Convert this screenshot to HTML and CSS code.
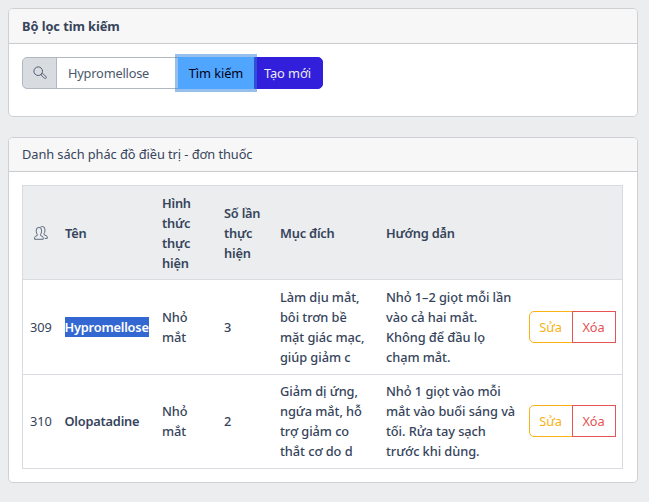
FILE: index.html
```html
<!DOCTYPE html>
<html lang="vi">
<head>
<meta charset="utf-8">
<title>Phác đồ điều trị - đơn thuốc</title>
<link rel="stylesheet" href="styles.css">
</head>
<body>
<section class="card filter">
  <header class="card-header strong">Bộ lọc tìm kiếm</header>
  <div class="card-body">
    <div class="input-group">
      <span class="addon">
        <svg class="icon" width="14" height="14" viewBox="0 0 14 14" fill="none" stroke="#4f5d73"><circle cx="5.2" cy="5.2" r="4.3"/><path d="M8.3 8.3l1.2-.8 3.4 2.9q.9.9.2 1.700-.8.8-1.700.1L8.2 9.2z" stroke-width=".9"/></svg>
      </span>
      <input class="field" type="text" value="Hypromellose">
      <button class="btn search">Tìm kiếm</button>
      <button class="btn create">Tạo mới</button>
    </div>
  </div>
</section>
<section class="card list">
  <header class="card-header">Danh sách phác đồ điều trị - đơn thuốc</header>
  <div class="card-body">
    <table class="table">
      <colgroup><col class="c-id"><col class="c-name"><col class="c-form"><col class="c-count"><col class="c-goal"><col class="c-guide"><col></colgroup>
      <thead>
        <tr>
          <th class="people"><svg class="icon" width="14" height="14" viewBox="0 0 14 14" fill="none" stroke="#4f5d73" stroke-width=".9"><path d="M.6 13.300v-1.700q0-.9 1-1.300l1.600-.7V8.200Q2.300 7.300 2.300 5.800V4q0-2.600 2.600-2.600T7.500 4v1.800q0 1.500-.9 2.400v1.400l1.600.7q1 .4 1 1.300v1.700z"/><path d="M6.400 1.200Q7.100.5 8.200.5q2.700 0 2.700 2.700v1.700q0 1.600-.9 2.500v1.300l2.100.9q1.200.5 1.200 1.500v1.300h-2.600"/></svg></th>
          <th>Tên</th><th>Hình<br>thức<br>thực<br>hiện</th><th>Số lần<br>thực<br>hiện</th><th>Mục đích</th><th>Hướng dẫn</th><th></th>
        </tr>
      </thead>
      <tbody>
        <tr>
          <td class="id">309</td><td class="name"><mark>Hypromellose</mark></td><td>Nhỏ<br>mắt</td><td>3</td>
          <td>Làm dịu mắt,<br>bôi trơn bề<br>mặt giác mạc,<br>giúp giảm c</td>
          <td>Nhỏ 1–2 giọt mỗi lần<br>vào cả hai mắt.<br>Không để đầu lọ<br>chạm mắt.</td>
          <td><div class="actions"><button class="btn edit">Sửa</button><button class="btn delete">Xóa</button></div></td>
        </tr>
        <tr>
          <td class="id">310</td><td class="name">Olopatadine</td><td>Nhỏ<br>mắt</td><td>2</td>
          <td>Giảm dị ứng,<br>ngứa mắt, hỗ<br>trợ giảm co<br>thắt cơ do d</td>
          <td>Nhỏ 1 giọt vào mỗi<br>mắt vào buổi sáng và<br>tối. Rửa tay sạch<br>trước khi dùng.</td>
          <td><div class="actions"><button class="btn edit">Sửa</button><button class="btn delete">Xóa</button></div></td>
        </tr>
      </tbody>
    </table>
  </div>
</section>
</body>
</html>
```
FILE: styles.css
```css
* { box-sizing: border-box; }
body {
  margin: 0;
  padding: 8px 11px 0 8px;
  background: #ebedef;
  color: #36445b;
  font: 400 12.8px/20px "Noto Sans", sans-serif;
  letter-spacing: -.06px;
}
.card {
  background: #fff;
  border: 1px solid #ced0d4;
  border-radius: 5px;
  overflow: hidden;
}
.filter { height: 109px; margin-bottom: 20px; }
.list { height: 346px; }
.card-header {
  height: 34px;
  padding: 6px 13px;
  background: #f7f7f7;
  border-bottom: 1px solid #c9cbcf;
}
.filter .card-header { height: 35px; padding-top: 7px; }
.strong { font-weight: 700; }
.card-body { padding: 13px; }
.input-group { display: flex; width: 301px; height: 32px; }
.icon { display: block; }
.addon {
  width: 35px;
  padding: 8px 0 0 10px;
  background: #d8dbe0;
  border: 1px solid #b1b7c1;
  border-radius: 5px 0 0 5px;
}
.field {
  width: 122px;
  margin-left: -1px;
  padding: 0 10px 0 11px;
  border: 1px solid #b1b7c1;
  border-right: 0;
  border-radius: 0;
  outline: 0;
  color: #4a586d;
  font: inherit;
  letter-spacing: -.2px;
}
.btn { font: inherit; font-weight: 400; letter-spacing: inherit; padding: 0; border: 1px solid; }
.search {
  width: 76px;
  background: #50a5ff;
  border-color: #50a5ff;
  color: #000015;
  box-shadow: 0 0 0 3px rgba(43, 127, 217, .5);
  z-index: 1;
}
.create {
  flex: 1;
  padding-right: 2px;
  background: #321fdb;
  border-color: #321fdb;
  border-radius: 0 5px 5px 0;
  color: #ebedef;
}
.table {
  width: 601px;
  table-layout: fixed;
  border-collapse: collapse;
  border: 1px solid #d8dbe0;
}
.c-id { width: 36px; }
.c-name { width: 97px; }
.c-form { width: 62px; }
.c-count { width: 56px; }
.c-goal { width: 106px; }
.c-guide { width: 143px; }
th, td {
  height: 94.4px;
  padding: 0 0 0 6.5px;
  border-bottom: 1px solid #d8dbe0;
  text-align: left;
  vertical-align: middle;
  font-weight: 500;
  white-space: nowrap;
}
td:last-child { padding-left: 6px; }
th { background: #ebedef; font-weight: 600; letter-spacing: -.2px; }
.people { padding-left: 10.5px; }
td.id { padding-left: 7px; font-weight: 400; }
td.name { padding-left: 6px; font-weight: 600; letter-spacing: -.2px; }
mark { display: inline-block; background: #3367d1; color: #fff; }
.actions { display: flex; }
.actions .btn { height: 32px; background: transparent; }
.edit { width: 44px; border-color: #f9b115; border-radius: 5px 0 0 5px; color: #f9b115; }
.actions .delete { width: 44px; margin-left: -1px; border-color: #e55353; color: #e55353; }
```
